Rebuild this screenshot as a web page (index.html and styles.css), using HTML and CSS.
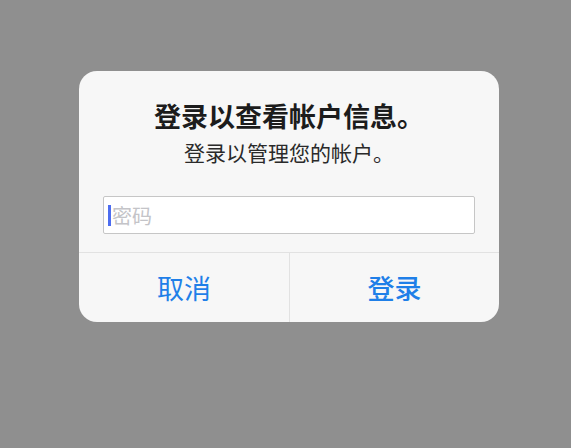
FILE: index.html
```html
<!DOCTYPE html>
<html lang="zh-CN">
<head>
    <meta charset="UTF-8">
    <meta name="viewport" content="width=device-width, initial-scale=1.0">
    <title>登录</title>
    <link rel="stylesheet" href="styles.css">
</head>
<body>
    <div class="alert">
        <div class="alert-body">
            <h1 class="alert-title">登录以查看帐户信息。</h1>
            <p class="alert-message">登录以管理您的帐户。</p>
            <div class="field">
                <span class="caret"></span>
                <span class="placeholder">密码</span>
            </div>
        </div>
        <div class="alert-actions">
            <button class="action">取消</button>
            <button class="action action-primary">登录</button>
        </div>
    </div>
</body>
</html>
```

FILE: styles.css
```css
body {
    font-family: "Noto Sans CJK SC", "Noto Sans", sans-serif;
    background-color: #8f8f8f;
    margin: 0;
    padding: 71px 0 0 79px;
    min-height: 100vh;
    box-sizing: border-box;
}
.alert {
    width: 420px;
    background-color: #f7f7f7;
    border-radius: 18px;
    overflow: hidden;
}
.alert-body {
    padding: 28px 24px 18px;
    text-align: center;
}
.alert-title {
    margin: 0;
    font-size: 27px;
    line-height: 34px;
    font-weight: 600;
    color: #1c1c1c;
}
.alert-message {
    margin: 4px 0 0;
    font-size: 21px;
    line-height: 30px;
    color: #2a2a2a;
}
.field {
    display: flex;
    align-items: center;
    height: 38px;
    margin-top: 29px;
    padding-left: 4px;
    background-color: #fff;
    border: 1px solid #c6c6c6;
    border-radius: 2px;
    box-sizing: border-box;
}
.caret {
    width: 3px;
    height: 21px;
    background-color: #4d6df0;
    margin-right: 1px;
}
.placeholder {
    font-size: 20px;
    color: #c4c4c8;
}
.alert-actions {
    display: grid;
    grid-template-columns: 210px 1fr;
    border-top: 1px solid #e2e2e2;
}
.action {
    height: 69px;
    border: none;
    background: none;
    font-family: inherit;
    font-size: 27px;
    color: #1f7fe8;
    padding: 0;
    cursor: pointer;
}
.action + .action {
    border-left: 1px solid #e2e2e2;
}
.action-primary {
    font-weight: 500;
}
```
